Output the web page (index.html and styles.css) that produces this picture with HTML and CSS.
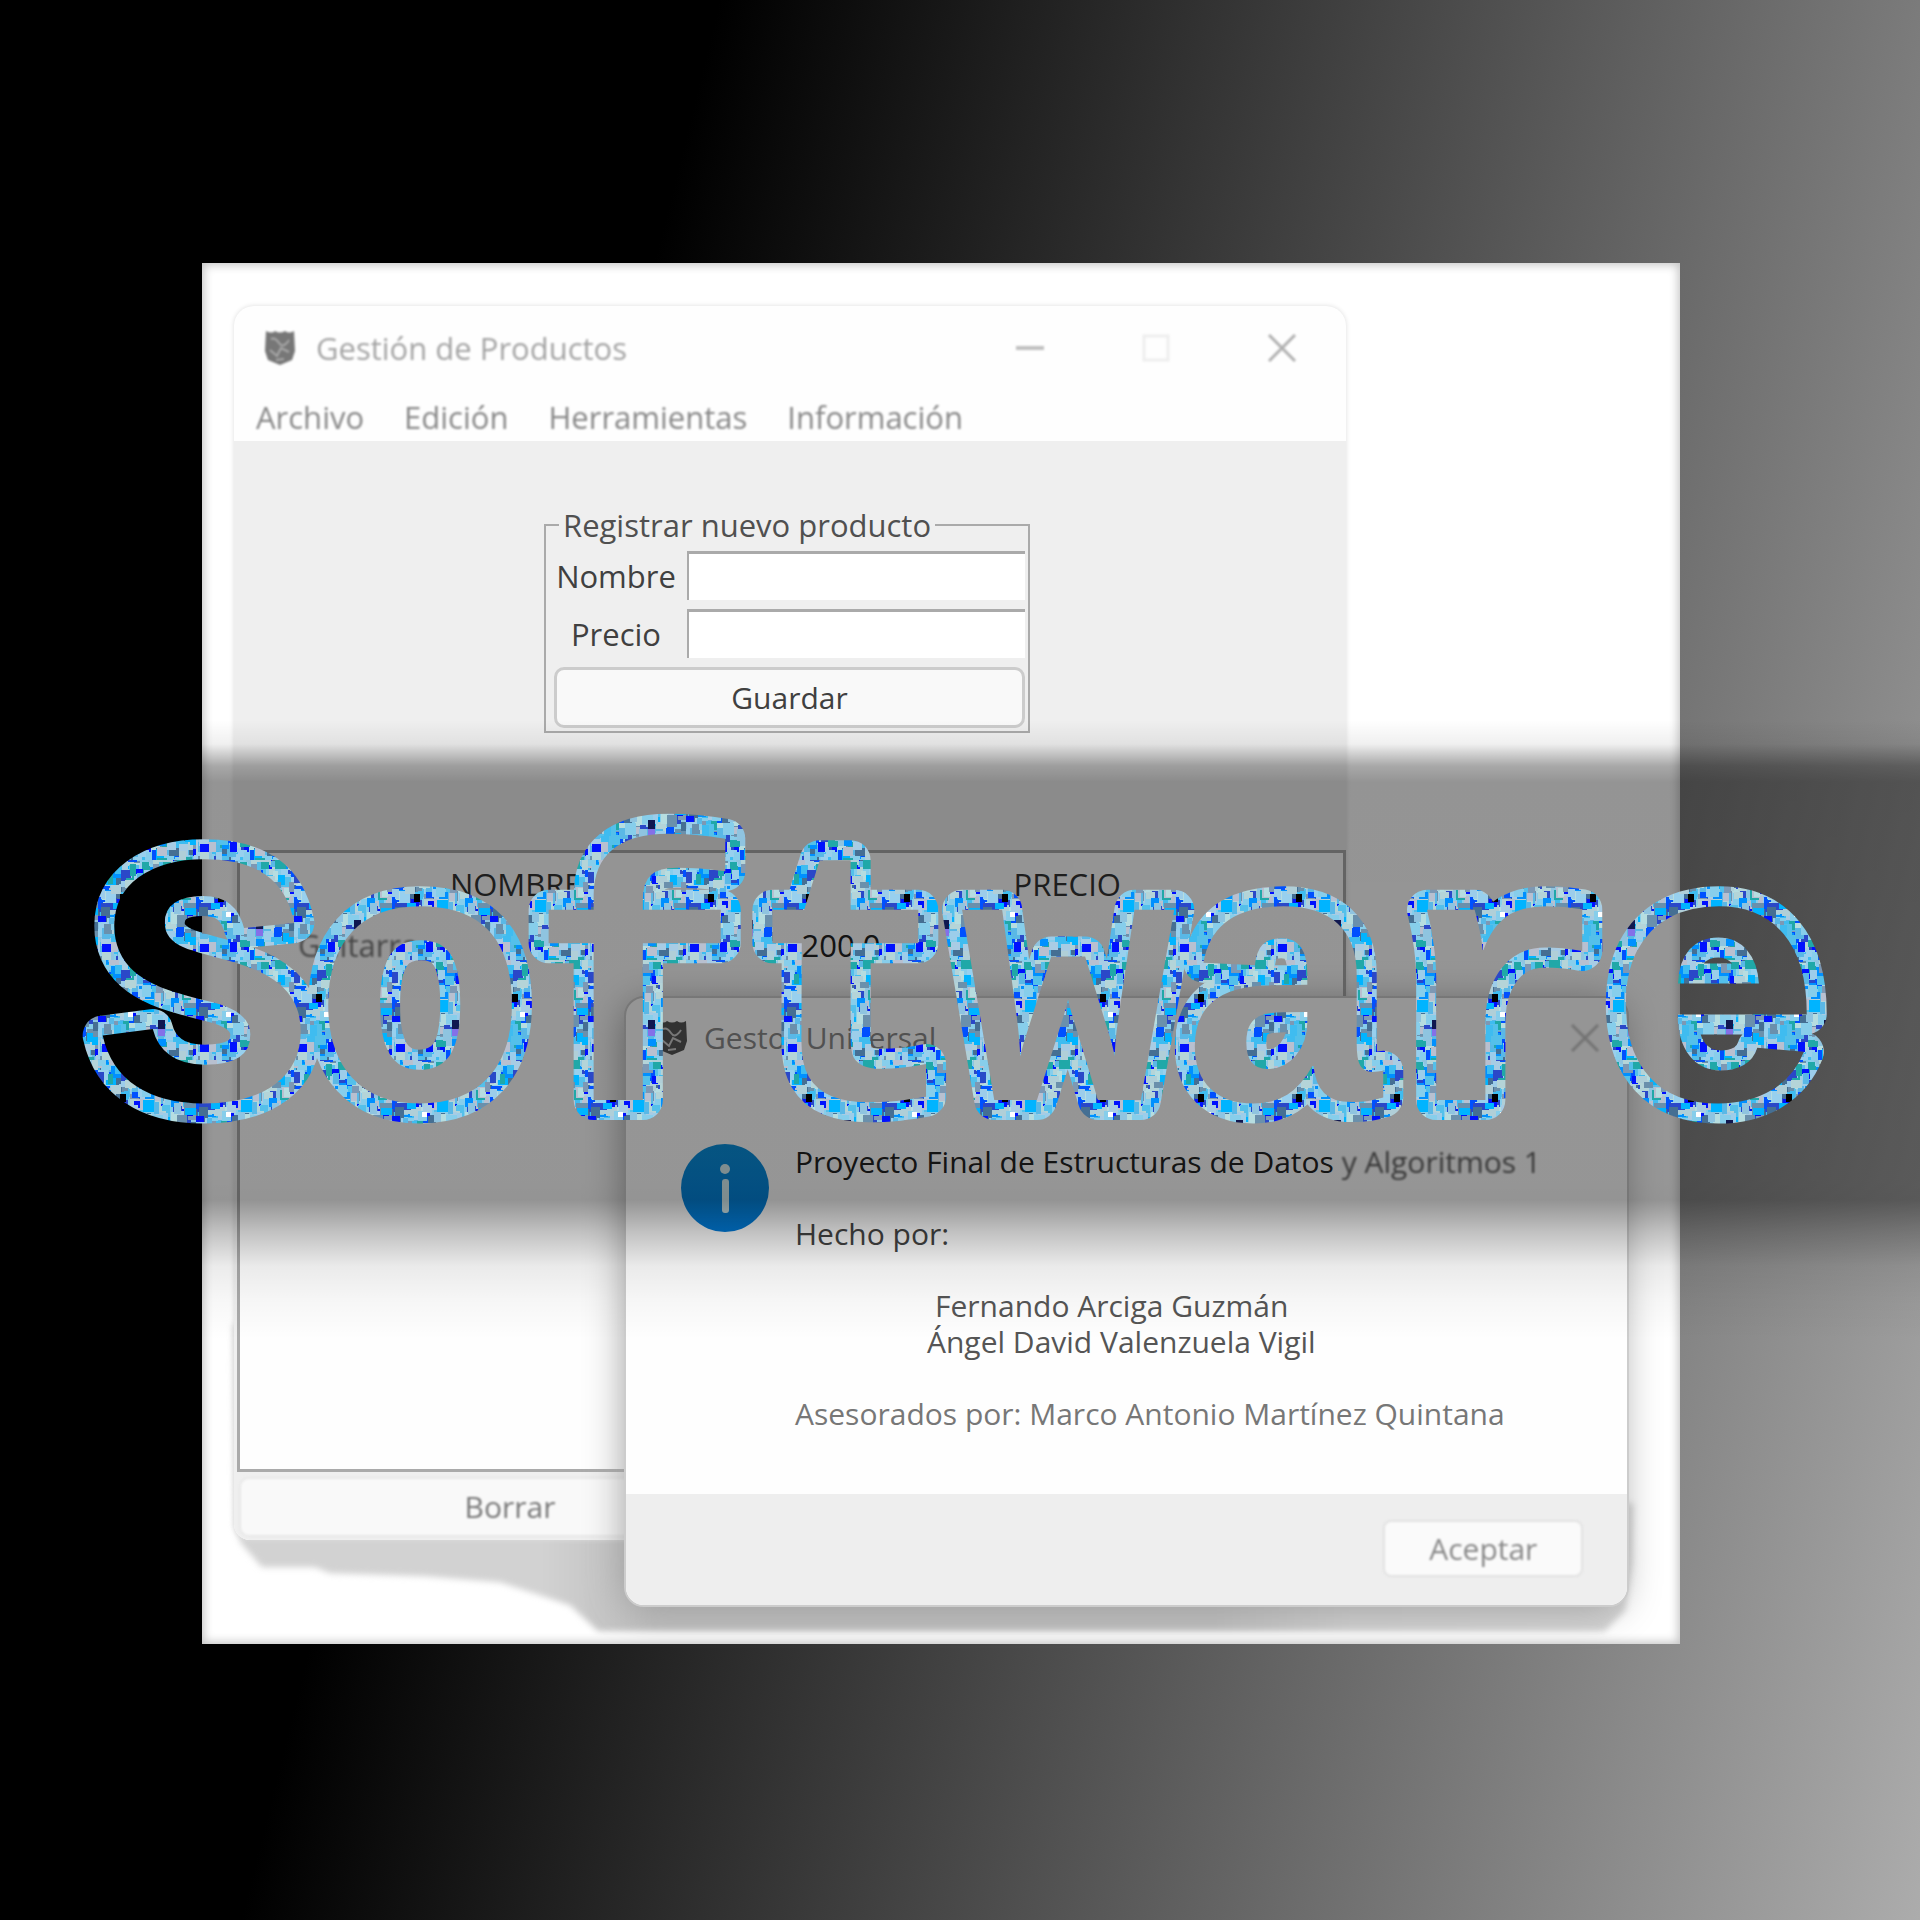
FILE: index.html
```html
<!DOCTYPE html>
<html lang="es">
<head>
<meta charset="utf-8">
<meta name="viewport" content="width=device-width, initial-scale=1">
<title>Software</title>
<link rel="stylesheet" href="styles.css">
</head>
<body>
<main class="cover">
  <section class="photo">
    <svg class="photo-shadow" viewBox="0 0 1478 1381" aria-hidden="true">
      <defs>
        <linearGradient id="fall" x1="0" y1="0" x2="1" y2="0">
          <stop offset="0" stop-color="#d2d2d2"/>
          <stop offset=".22" stop-color="#d2d2d2"/>
          <stop offset=".3" stop-color="#bcbcbc"/>
          <stop offset=".7" stop-color="#bcbcbc"/>
          <stop offset=".8" stop-color="#cecece"/>
          <stop offset="1" stop-color="#d2d2d2"/>
        </linearGradient>
      </defs>
      <path fill="url(#fall)" d="M31 1060 L33 1262 L39 1280 L60 1304 L113 1304 L128 1310 L223 1313 L298 1319 L338 1332 L368 1342 L396 1368 L1402 1368 L1423 1347 L1430 1300 L1431 1240 L1400 1240 L400 1240Z"/>
    </svg>

    <article class="window">
      <header class="titlebar soft">
        <svg class="crest" viewBox="0 0 32 36" aria-hidden="true"><path fill="#777" d="M2 1q6 3 9 0 5 3 10 0 4 3 9 0l1 20-3 9-12 5-12-5-3-9z"/><path fill="none" stroke="#aaa" stroke-width="2" d="M7 9q4-2 8 4t10-3M6 20l7 6 4-8 8 4M12 30l8-1"/></svg>
        <h2 class="title">Gestión de Productos</h2>
        <div class="controls">
          <button class="control" aria-label="Minimizar"><svg viewBox="0 0 28 28"><path stroke="#c0c0c0" stroke-width="4" d="M0 14h28"/></svg></button>
          <button class="control" aria-label="Maximizar"><svg viewBox="0 0 28 28"><path fill="none" stroke="#eee" stroke-width="3" d="M2 2h24v24H2z"/></svg></button>
          <button class="control" aria-label="Cerrar"><svg viewBox="0 0 28 28"><path stroke="#b0b0b0" stroke-width="3" d="M1 1l26 26M27 1L1 27"/></svg></button>
        </div>
      </header>
      <nav class="menu soft">
        <a href="#archivo">Archivo</a>
        <a href="#edicion">Edición</a>
        <a href="#herramientas">Herramientas</a>
        <a href="#informacion">Información</a>
      </nav>
      <div class="body">
        <form class="form">
          <fieldset class="group">
            <legend>Registrar nuevo producto</legend>
            <div class="fields">
              <label for="nombre">Nombre</label>
              <input id="nombre" type="text">
              <label for="precio">Precio</label>
              <input id="precio" type="text">
              <button class="save" type="button">Guardar</button>
            </div>
          </fieldset>
        </form>
        <div class="list">
          <table>
            <thead><tr><th>NOMBRE</th><th>PRECIO</th></tr></thead>
            <tbody><tr><td class="first">Guitarra</td><td>200.0</td></tr></tbody>
          </table>
        </div>
        <button class="delete soft" type="button">Borrar</button>
      </div>
    </article>

    <article class="dialog">
      <header class="dialog-title">
        <svg class="crest" viewBox="0 0 32 36" aria-hidden="true"><path fill="#555" d="M2 1q6 3 9 0 5 3 10 0 4 3 9 0l1 20-3 9-12 5-12-5-3-9z"/><path fill="none" stroke="#ccc" stroke-width="2" d="M7 9q4-2 8 4t10-3M6 20l7 6 4-8 8 4M12 30l8-1"/></svg>
        <h2 class="title">Gestor Universal</h2>
        <button class="control soft" aria-label="Cerrar"><svg viewBox="0 0 28 28"><path stroke="#c4c4c4" stroke-width="3" d="M1 1l26 26M27 1L1 27"/></svg></button>
      </header>
      <div class="message">
        <svg class="info" viewBox="0 0 88 88" aria-hidden="true"><defs><linearGradient id="blue" x1="0" y1="0" x2="0" y2="1"><stop offset="0" stop-color="#0a90dc"/><stop offset="1" stop-color="#007cdc"/></linearGradient></defs><circle cx="44" cy="44" r="44" fill="url(#blue)"/><circle cx="44" cy="25" r="5" fill="#d8f0f4"/><rect x="41" y="35" width="7" height="34" rx="3" fill="#d8f0f4"/></svg>
        <div class="text">
          <p>Proyecto Final de Estructuras de Datos <span class="faded">y Algoritmos 1</span></p>
          <p class="by">Hecho por:</p>
          <p class="authors"><span class="lead">Fernando Arciga Guzmán</span><br>Ángel David Valenzuela Vigil</p>
          <p class="advisor">Asesorados por: Marco Antonio Martínez Quintana</p>
        </div>
      </div>
      <footer class="actions"><button class="accept soft" type="button">Aceptar</button></footer>
    </article>
  </section>

  <div class="band"></div>

  <h1 class="wordmark">
    <svg viewBox="0 0 1920 400">
      <defs>
        <pattern id="mosaic" width="98" height="100" patternUnits="userSpaceOnUse"></pattern>
        <mask id="outside" maskUnits="userSpaceOnUse" x="0" y="0" width="1920" height="400">
          <rect width="1920" height="400" fill="#fff"/>
          <use href="#word" fill="#000"/>
        </mask>
      </defs>
      <g mask="url(#outside)" stroke="url(#mosaic)" fill="none" stroke-width="40" stroke-linejoin="round">
        <text id="word" class="word" x="96" y="340">Software</text>
      </g>
    </svg>
  </h1>
</main>
<script src="mosaic.js"></script>
</body>
</html>
```

FILE: styles.css
```css
* { box-sizing: border-box; }

body {
  margin: 0;
  background: #000;
  color: #222;
  font: 31px/36px "Open Sans", "Noto Sans", sans-serif;
}

h1, h2, p { margin: 0; font-weight: 400; }

button, input { font: inherit; color: inherit; }

.cover {
  position: relative;
  min-height: 100vh;
  padding-top: 263px;
  overflow: hidden;
  background: linear-gradient(104deg, #000 30%, #acacac 100%);
}

.photo {
  position: relative;
  width: 77%;
  margin-left: 202px;
  padding: 43px 32px 104px;
  background: #fff;
  box-shadow: inset 0 0 10px 2px #c4c4c4;
}

.photo-shadow {
  position: absolute;
  inset: 0;
  width: 100%;
  filter: blur(3px);
}

.soft { filter: blur(1px); }

.window {
  position: relative;
  width: 1112px;
  max-width: 100%;
  border-radius: 20px 20px 16px 16px;
  background: #fefefe;
  box-shadow: 0 0 5px #ddd;
}

.titlebar {
  display: flex;
  align-items: center;
  height: 84px;
  padding: 0 50px 0 30px;
  color: #a4a4a4;
}

.crest { width: 32px; height: 36px; flex: none; }
.title { margin-left: 20px; font-size: 31px; line-height: 36px; }

.controls { display: flex; gap: 98px; margin-left: auto; }

.control {
  width: 28px;
  height: 28px;
  padding: 0;
  border: 0;
  background: none;
}

.control svg { display: block; width: 28px; height: 28px; }

.menu {
  display: flex;
  gap: 40px;
  height: 51px;
  padding: 9px 22px 0;
}

.menu a { color: #888; text-decoration: none; }

.body {
  padding: 66px 0 3px;
  border-radius: 0 0 16px 16px;
  background: #efefef;
}

.form { display: flex; justify-content: center; }

.group {
  width: 486px;
  margin: 0 0 0 -6px;
  padding: 8px 3px 3px 8px;
  border: 2px solid #aaa;
}

.group legend { margin-left: 5px; padding: 0 4px; color: #505050; }

.fields {
  display: grid;
  grid-template-columns: 124px 1fr;
  gap: 9px;
  align-items: center;
  text-align: center;
  color: #404040;
}

.fields input {
  width: 100%;
  height: 49px;
  border: 0;
  border-top: 3px solid #aaa;
  border-left: 2px solid #aaa;
  background: #fff;
}

.save {
  grid-column: 1 / -1;
  height: 61px;
  border: 3px solid #ccc;
  border-radius: 10px;
  background: #f9f9f9;
  font-size: 30px;
}

.list {
  min-height: 622px;
  margin: 117px 0 5px 3px;
  border: 3px solid #aaa;
  background: #fefefe;
}

.list table {
  width: 100%;
  border-collapse: collapse;
  table-layout: fixed;
}

.list th { height: 62px; padding: 0; color: #333; font-weight: 400; }
.list td { height: 60px; padding: 0 10px; }
.list .first { padding-left: 58px; color: #777; filter: blur(1px); }

.delete {
  display: block;
  width: 542px;
  height: 60px;
  margin-left: 5px;
  border: 2px solid #e8e8e8;
  border-radius: 10px;
  background: #f9f9f9;
  color: #777;
  font-size: 30px;
}

.dialog {
  position: absolute;
  top: 733px;
  left: 422px;
  width: 68%;
  overflow: hidden;
  border: 2px solid #ccc;
  border-radius: 20px;
  background: #fefefe;
  box-shadow: -4px 4px 40px -6px #999;
  font-size: 30px;
}

.dialog-title {
  display: flex;
  align-items: center;
  height: 80px;
  padding: 0 28px 0 30px;
  color: #8a8a8a;
}

.dialog-title .title { margin-left: 16px; font-size: 30px; }
.dialog-title .control { margin-left: auto; }

.message {
  display: flex;
  align-items: flex-start;
  gap: 26px;
  min-height: 416px;
  padding: 66px 0 0 55px;
}

.info { flex: none; width: 88px; height: 88px; }

.text p { margin-bottom: 36px; white-space: nowrap; }
.text .by { color: #444; }
.text .authors { padding-left: 132px; color: #555; }
.text .lead { padding-left: 8px; }
.text .advisor { color: #777; }
.faded { color: #606060; filter: blur(1px); }

.actions {
  display: flex;
  justify-content: flex-end;
  padding: 26px 44px 28px;
  background: #eee;
}

.accept {
  width: 200px;
  height: 57px;
  border: 2px solid #e2e2e2;
  border-radius: 8px;
  background: #fafafa;
  color: #888;
}

/* Dark strip behind the wordmark */
.band {
  position: absolute;
  top: 720px;
  left: 0;
  right: 0;
  height: 620px;
  background: linear-gradient(
    transparent 0,
    rgba(0, 0, 0, .06) 24px,
    rgba(0, 0, 0, .34) 46px,
    rgba(0, 0, 0, .42) 62px,
    rgba(0, 0, 0, .41) 460px,
    rgba(0, 0, 0, .42) 480px,
    rgba(0, 0, 0, .24) 512px,
    rgba(0, 0, 0, .08) 546px,
    rgba(0, 0, 0, .03) 580px,
    transparent
  );
}

.wordmark {
  position: absolute;
  top: 760px;
  left: 0;
  width: 100%;
  font-size: 16px;
  line-height: 0;
}

.wordmark svg { width: 100%; overflow: visible; }

.word {
  font: 700 360px "Liberation Mono", monospace;
}
```

FILE: mosaic.js
```js
// Fills the wordmark pattern with overlapping coloured tiles.
const colours = ['#87ceeb', '#9ccdea', '#b0cfd8', '#b6dde0', '#5ab8e6', '#00b4ff', '#0090ff', '#0050ff', '#0010ff', '#2a48c8', '#456f93', '#7d98b4', '#20a8a8', '#8fc4e0', '#b8c0d0', '#3fbcf0', '#98d0ee', '#b4d4d8', '#54c0ea', '#6a90ac', '#a8cce4'];
const pattern = document.getElementById('mosaic');
let seed = 7;
const next = (limit) => {
  seed = (seed * 16807) % 2147483647;
  return seed % limit;
};
const tile = (x, y, w, h, fill) => {
  const rect = document.createElementNS('http://www.w3.org/2000/svg', 'rect');
  Object.entries({ x, y, width: w, height: h, fill, stroke: 'none' }).forEach(([k, v]) => rect.setAttribute(k, v));
  pattern.append(rect);
};
tile(0, 0, 98, 100, '#87ceeb');
for (let i = 0; i < 420; i += 1) {
  tile(next(104) - 6, next(106) - 6, 5 + next(7), 6 + next(7), colours[next(colours.length)]);
}
tile(60, 60, 7, 9, '#101850');
tile(60, 69, 7, 7, '#8470e8');
tile(22, 34, 6, 8, '#000');
tile(30, 52, 5, 5, '#fff');
```
